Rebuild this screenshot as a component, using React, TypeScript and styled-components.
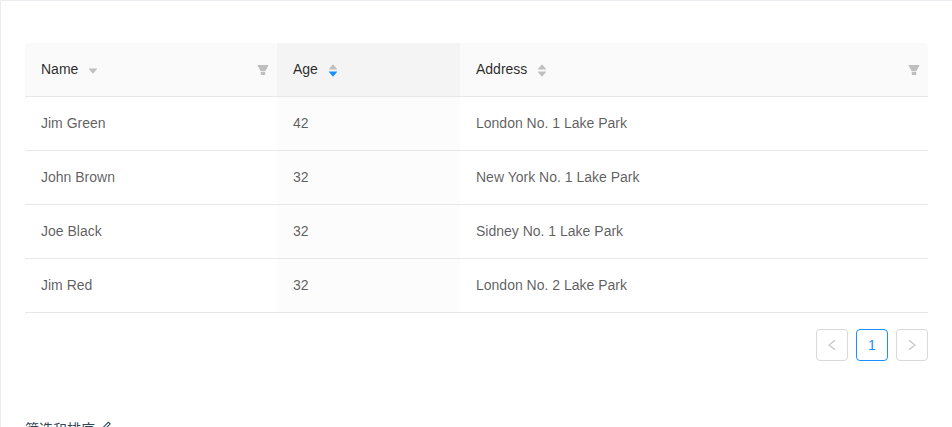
import React from "react";
import styled, { createGlobalStyle } from "styled-components";

const GlobalStyle = createGlobalStyle`
  * { box-sizing: border-box; }
  body {
    margin: 0;
    background: #fff;
    color: rgba(0, 0, 0, 0.65);
    font: 14px/21px "Liberation Sans", Arial, "Noto Sans CJK SC", sans-serif;
  }
`;

const paths = {
  up: "M858.9 689L530.5 308.2c-9.4-10.9-27.5-10.9-37 0L165.1 689c-12.2 14.2-1.2 35 18.5 35h656.8c19.7 0 30.7-20.8 18.5-35z",
  down: "M840.4 300H183.6c-19.7 0-30.7 20.8-18.5 35l328.5 380.8c9.4 10.9 27.5 10.9 37 0L858.9 335c12.2-14.2 1.2-35-18.5-35z",
  filter:
    "M349 838c0 17.7 14.2 32 31.8 32h262.4c17.6 0 31.8-14.3 31.8-32V642H349v196zm531.1-684H143.9c-24.5 0-39.8 26.7-27.5 48l221.3 376h348.8l221.3-376c12.1-21.3-3.2-48-27.7-48z",
  left: "M724 218.3V141c0-6.7-7.7-10.4-12.9-6.3L260.3 486.8a31.86 31.86 0 0 0 0 50.3l450.8 352.1c5.3 4.1 12.9.4 12.9-6.3v-77.3c0-4.9-2.3-9.6-6.1-12.6l-360-281 360-281.1c3.8-3 6.1-7.7 6.1-12.6z",
  right:
    "M765.7 486.8L314.9 134.7A7.97 7.97 0 0 0 302 141v77.3c0 4.9 2.3 9.6 6.1 12.6l360 281.1-360 281.1c-3.9 3-6.1 7.7-6.1 12.6V883c0 6.7 7.7 10.4 12.9 6.3l450.8-352.1a31.96 31.96 0 0 0 0-50.4z",
  edit: "M257.7 752c2 0 4-.2 6-.5L431.9 722c2-.4 3.9-1.3 5.3-2.8l423.9-423.9a9.96 9.96 0 0 0 0-14.1L694.9 114.9c-1.9-1.9-4.4-2.9-7.1-2.9s-5.2 1-7.1 2.9L256.8 538.8c-1.5 1.5-2.4 3.3-2.8 5.3l-29.5 168.2a33.5 33.5 0 0 0 9.4 29.8c6.6 6.4 14.9 9.9 23.8 9.9zm67.4-174.4L687.8 215l73.3 73.3-362.7 362.6-88.9 15.7 15.6-89zM880 836H144c-17.7 0-32 14.3-32 32v36c0 4.4 3.6 8 8 8h784c4.4 0 8-3.6 8-8v-36c0-17.7-14.3-32-32-32z",
};

type IconName = keyof typeof paths;

const Svg = styled.svg`
  display: block;
  flex: none;
  fill: currentColor;
`;

const Icon = ({ name, size }: { name: IconName; size: number }) => (
  <Svg viewBox="0 0 1024 1024" width={size} height={size} aria-hidden="true">
    <path d={paths[name]} />
  </Svg>
);

const Demo = styled.main`
  height: 100vh;
  overflow: hidden;
  border: solid #ebedf0;
  border-width: 1px 0 0 1px;
`;

const Preview = styled.section`
  padding: 42px 24px 50px;
`;

const Table = styled.table`
  width: 100%;
  table-layout: fixed;
  border-collapse: separate;
  border-spacing: 0;
  text-align: left;
`;

const NameCol = styled.col`
  width: 252px;
`;

const AgeCol = styled.col`
  width: 183px;
`;

const HeadCell = styled.th<{ $sorted?: boolean }>`
  padding: 16px 7px 16px 16px;
  border-bottom: 1px solid #e8e8e8;
  background: ${(p) => (p.$sorted ? "#f4f4f4" : "#fafafa")};
  color: rgba(0, 0, 0, 0.85);
  font-weight: 500;

  &:first-child { border-top-left-radius: 4px; }
  &:last-child { border-top-right-radius: 4px; }
`;

const HeadContent = styled.div`
  display: flex;
  align-items: center;
  justify-content: space-between;
  height: 21px;
`;

const SortButton = styled.button`
  display: flex;
  align-items: center;
  gap: 9px;
  padding: 0;
  border: 0;
  background: none;
  color: inherit;
  font: inherit;
  cursor: pointer;
`;

const Carets = styled.span`
  display: grid;
  grid-auto-rows: 7px;
  padding-top: 2px;
`;

const Caret = styled.span<{ $active?: boolean }>`
  display: flex;
  align-items: center;
  height: 7px;
  color: ${(p) => (p.$active ? "#1890ff" : "#bfbfbf")};
`;

const FilterButton = styled.button`
  display: flex;
  padding: 0;
  border: 0;
  background: none;
  color: #bfbfbf;
  cursor: pointer;
`;

const Cell = styled.td<{ $sorted?: boolean }>`
  padding: 16px;
  border-bottom: 1px solid #e8e8e8;
  background: ${(p) => (p.$sorted ? "rgba(0, 0, 0, 0.01)" : "transparent")};
`;

const Pagination = styled.nav`
  display: flex;
  justify-content: flex-end;
  gap: 8px;
  margin-top: 16px;
`;

const PageButton = styled.button<{ $active?: boolean }>`
  display: flex;
  align-items: center;
  justify-content: center;
  width: 32px;
  height: 32px;
  padding: 0;
  border: 1px solid ${(p) => (p.$active ? "#1890ff" : "#d9d9d9")};
  border-radius: 4px;
  background: #fff;
  color: ${(p) => (p.$active ? "#1890ff" : "rgba(0, 0, 0, 0.25)")};
  font: inherit;
`;

const Caption = styled.footer`
  display: flex;
  align-items: flex-start;
  gap: 4px;
  padding: 8px 24px 18px;
  color: #314659;
`;

const EditLink = styled.a`
  padding-top: 1px;
  color: inherit;
`;

interface HeaderProps {
  title: string;
  carets: ("up" | "down")[];
  sorted?: boolean;
  filterable?: boolean;
}

const Header = ({ title, carets, sorted, filterable }: HeaderProps) => (
  <HeadCell scope="col" $sorted={sorted} aria-sort={sorted ? "descending" : undefined}>
    <HeadContent>
      <SortButton type="button">
        {title}
        <Carets>
          {carets.map((c) => (
            <Caret key={c} $active={sorted && c === "down"}>
              <Icon name={c} size={12} />
            </Caret>
          ))}
        </Carets>
      </SortButton>
      {filterable && (
        <FilterButton type="button" aria-label={`Filter ${title}`}>
          <Icon name="filter" size={14} />
        </FilterButton>
      )}
    </HeadContent>
  </HeadCell>
);

const rows = [
  { name: "Jim Green", age: 42, address: "London No. 1 Lake Park" },
  { name: "John Brown", age: 32, address: "New York No. 1 Lake Park" },
  { name: "Joe Black", age: 32, address: "Sidney No. 1 Lake Park" },
  { name: "Jim Red", age: 32, address: "London No. 2 Lake Park" },
];

export default function App() {
  return (
    <>
      <GlobalStyle />
      <Demo>
        <Preview>
          <Table>
            <colgroup>
              <NameCol />
              <AgeCol />
              <col />
            </colgroup>
            <thead>
              <tr>
                <Header title="Name" carets={["down"]} filterable />
                <Header title="Age" carets={["up", "down"]} sorted />
                <Header title="Address" carets={["up", "down"]} filterable />
              </tr>
            </thead>
            <tbody>
              {rows.map((row) => (
                <tr key={row.name}>
                  <Cell>{row.name}</Cell>
                  <Cell $sorted>{row.age}</Cell>
                  <Cell>{row.address}</Cell>
                </tr>
              ))}
            </tbody>
          </Table>
          <Pagination aria-label="Pagination">
            <PageButton type="button" disabled aria-label="Previous page">
              <Icon name="left" size={14} />
            </PageButton>
            <PageButton type="button" $active aria-current="page">
              1
            </PageButton>
            <PageButton type="button" disabled aria-label="Next page">
              <Icon name="right" size={14} />
            </PageButton>
          </Pagination>
        </Preview>
        <Caption>
          筛选和排序
          <EditLink href="#edit" aria-label="Edit">
            <Icon name="edit" size={14} />
          </EditLink>
        </Caption>
      </Demo>
    </>
  );
}
